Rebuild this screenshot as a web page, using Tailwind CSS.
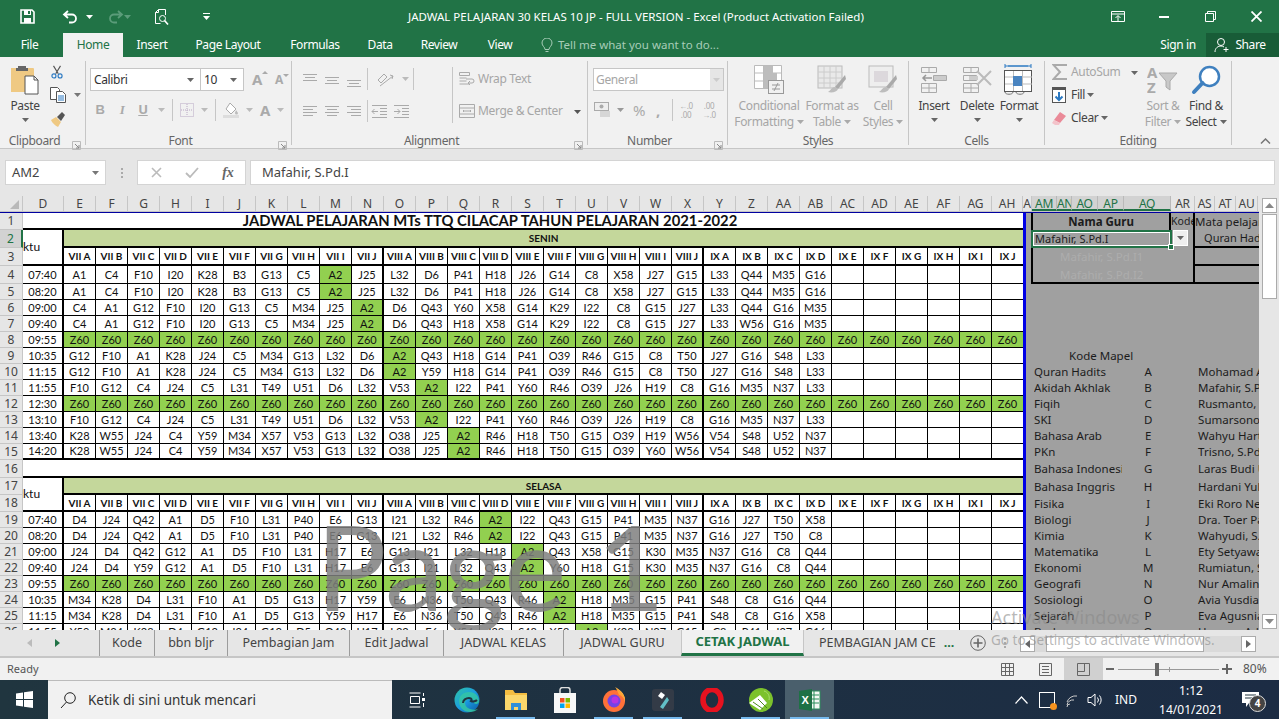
<!DOCTYPE html>
<html lang="id">
<head>
<meta charset="UTF-8">
<title>JADWAL PELAJARAN 30 KELAS 10 JP - Excel</title>
<script src="https://cdn.jsdelivr.net/npm/@tailwindcss/browser@4"></script>
</head>
<body class="bg-[#e6e6e6]">
<div id="app" class="relative w-[1279px] h-[719px] overflow-hidden flex flex-col text-[12px] text-[#444] font-['Noto_Sans',sans-serif]"></div>
<script>
// small helpers for repeated ribbon bits
const caret = (c = '#777') => `<svg width="7" height="4" class="inline-block shrink-0"><path d="M0 0h7L3.5 4z" fill="${c}"/></svg>`;
const launcher = `<svg width="9" height="9" class="absolute right-[4px] bottom-[-2px]"><path d="M.5.5h8v8h-8z" fill="none" stroke="#bbb"/><path d="M3 3l4 4M7 4v3H4" fill="none" stroke="#888"/></svg>`;
const vsep = (h = 'h-[22px]') => `<div class="w-px ${h} bg-[#c6c6c6] shrink-0"></div>`;

function group(cls, label, hasLauncher, inner) {
  return `<div class="relative flex flex-col h-[84px] shrink-0 border-r border-[#c6c6c6] ${cls}">
    <div class="h-[73px] shrink-0 flex">${inner}</div>
    <div class="relative h-[14px] shrink-0 leading-[14px] text-center text-[#666] ${hasLauncher ? 'pr-[16px]' : ''}">${label}${hasLauncher ? launcher : ''}</div>
  </div>`;
}
function big(cls, icon, lines, opts = {}) {
  const col = opts.off ? 'text-[#a6a6a6]' : 'text-[#444]';
  const car = opts.off ? '#aaa' : '#666';
  return `<div class="flex flex-col items-center shrink-0 ${cls} ${col}">
    <div class="h-[37px] flex items-center justify-center shrink-0">${icon}</div>
    ${lines.map((l, i) => `<div class="h-[16px] leading-[16px] whitespace-nowrap flex items-center gap-[3px]">${l}${opts.inline && i == lines.length - 1 ? caret(car) : ''}</div>`).join('')}
    ${opts.below ? `<div class="h-[12px] flex items-center">${caret(car)}</div>` : ''}
  </div>`;
}

// ribbon icons
const icons = {
  paste: `<svg width="30" height="30" viewBox="0 0 30 30"><path d="M1 3h22a1 1 0 0 1 1 1v23H1z" fill="#efc983"/><path d="M8 3V1h8v2h2v3H6V3z" fill="#666"/><path d="M15 11h9l4 4v14H15z" fill="#fff" stroke="#555"/><path d="M24 11v4h4" fill="none" stroke="#555"/></svg>`,
  cut: `<svg width="16" height="16" viewBox="0 0 16 16"><path d="M4 1l5.5 9M12 1L6.5 10" stroke="#555" stroke-width="1.3" fill="none"/><circle cx="4.5" cy="12.5" r="2.3" fill="none" stroke="#2b79c2" stroke-width="1.3"/><circle cx="11.5" cy="12.5" r="2.3" fill="none" stroke="#2b79c2" stroke-width="1.3"/></svg>`,
  copy: `<svg width="16" height="16" viewBox="0 0 16 16" fill="#fff" stroke="#555"><path d="M.5.5h7l2 2v10h-9z"/><path d="M6.5 4.5h6l3 3v8h-9z"/><path d="M8 9h6M8 11h6M8 13h6" stroke="#2b79c2"/></svg>`,
  painter: `<svg width="16" height="16" viewBox="0 0 16 16"><path d="M1 9l5-3 5 5-3 5C6 15 2 12 1 9z" fill="#efc983"/><path d="M7 6l5-5 3 3-4 6z" fill="#555"/></svg>`,
  borders: `<svg width="14" height="14" viewBox="0 0 14 14" fill="none" stroke="#b9a9c4" stroke-dasharray="1 1"><path d="M.5.5h13v13H.5zM7 1v12M1 7h12"/></svg>`,
  fill: `<svg width="16" height="16" viewBox="0 0 16 16"><path d="M7 1l6 6-5 5-5-5z" fill="#fff" stroke="#aaa"/><path d="M13 8l2 3a1.500 1.500 0 0 1-3 0z" fill="#bbb"/><rect y="13" width="16" height="3" fill="#ddd"/></svg>`,
  cond: `<svg width="30" height="30" viewBox="0 0 30 30"><path d="M.5.5h27v23H.5zM9.500 1v22M18.500 1v22M1 8h26M1 16h26" fill="#fff" stroke="#bbb"/><path d="M10 1h9v7h-9zM10 8h13v8H10zM10 16h6v7h-6z" fill="#bdbdbd"/><rect x="14.500" y="15.500" width="15" height="13" fill="#f1f1f1" stroke="#999"/><path d="M18 20h8M18 24h8M24 18l-4 8" stroke="#999"/></svg>`,
  table: `<svg width="30" height="30" viewBox="0 0 30 30"><rect x="1" y="1" width="24" height="22" fill="#e9e9e9" stroke="#bbb"/><path d="M1 7h24M1 13h24M1 18h24M7 1v22M13 1v22M19 1v22" stroke="#ccc"/><path d="M28 10L18 22l3 2L29 14z" fill="#aaa"/><path d="M18 22c-3 0-4 3-7 5 4 1 9 0 10-3z" fill="#bdbdbd"/></svg>`,
  styles: `<svg width="30" height="30" viewBox="0 0 30 30"><rect x="1" y="1" width="24" height="21" fill="#eee" stroke="#bbb"/><rect x="6" y="6" width="14" height="11" fill="#dcd8dc"/><path d="M28 10L18 22l3 2L29 14z" fill="#aaa"/><path d="M18 22c-3 0-4 3-7 5 4 1 9 0 10-3z" fill="#bdbdbd"/></svg>`,
  insert: `<svg width="28" height="28" viewBox="0 0 28 28" fill="none" stroke="#aaa"><path d="M1.500 1.500h15v5h-15zM9 1.500v5M1.500 17.500h15v9h-15zM9 17.500v9M1.500 22h15M13.500 9.500h13v5h-13zM20 9.500v5" /><path d="M12 12H3M6 9l-3 3 3 3" stroke="#999" stroke-width="1.500"/><rect x="14" y="10" width="12" height="4" fill="#ccc" stroke="none"/></svg>`,
  del: `<svg width="30" height="28" viewBox="0 0 30 28" fill="none" stroke="#aaa"><path d="M1.500 1.500h15v5h-15zM9 1.500v5M1.500 17.500h15v9h-15zM9 17.500v9M1.500 22h15M1.500 9.500h13v5h-13z"/><rect x="7" y="10" width="9" height="4" fill="#ccc" stroke="none"/><path d="M15 5l14 14M29 5L15 19" stroke="#bbb" stroke-width="2"/></svg>`,
  format: `<svg width="30" height="34" viewBox="0 0 30 34"><path d="M1 3h26M1 1v4M27 1v4" stroke="#2b79c2" fill="none"/><path d="M4 3h20" stroke="#2b79c2" stroke-width="1"/><rect x=".500" y="7.500" width="27" height="21" fill="#fff" stroke="#555"/><path d="M1 14h27M1 21h27M9.500 8v20M18.500 8v20" stroke="#bbb"/><rect x="9" y="13" width="9" height="10" fill="#4a84c0"/><path d="M1 29c0 3 8 3 8 0M12 29c0 3 8 3 8 0" fill="none" stroke="#777"/></svg>`,
  sum: `<svg width="16" height="16" viewBox="0 0 16 16"><path d="M15 1H1.500l6.500 7-6.500 7H15" fill="none" stroke="#aaa" stroke-width="2"/></svg>`,
  fillDown: `<svg width="14" height="16" viewBox="0 0 14 16"><rect x=".5" y=".5" width="13" height="15" fill="#fff" stroke="#555"/><rect x="0" y="0" width="14" height="3" fill="#555"/><path d="M7 5v8M3.500 9.500L7 13l3.500-3.500" fill="none" stroke="#2b79c2" stroke-width="2"/></svg>`,
  clear: `<svg width="14" height="13" viewBox="0 0 14 13"><path d="M8 0l6 4-6 7-6-3z" fill="#ea8a98"/><path d="M2 8l6 3-1 2H3L0 11z" fill="#f3c3ca"/></svg>`,
  sort: `<svg width="32" height="30" viewBox="0 0 32 30"><text x="0" y="13" font-family="Noto Sans" font-weight="700" font-size="15" fill="#aaa">A</text><text x="0" y="28" font-family="Noto Sans" font-weight="700" font-size="15" fill="#aaa">Z</text><path d="M12 8h18l-7 8v9l-4-3v-6z" fill="#c8c8c8" stroke="#aaa"/></svg>`,
  find: `<svg width="30" height="30" viewBox="0 0 30 30"><circle cx="18.500" cy="11.500" r="9.500" fill="#fff" stroke="#3f80bf" stroke-width="2.500"/><path d="M11.500 18L3 27" stroke="#3f80bf" stroke-width="4" stroke-linecap="round"/></svg>`,
};

function smallBtn(cls, inner) { return `<div class="flex items-center justify-center shrink-0 ${cls}">${inner}</div>`; }
function lines(ys, w) { return `<svg width="16" height="16" viewBox="0 0 16 16" stroke="#aaa">${ys.map(p => `<path d="M${p[0]} ${p[2]}.500H${p[1]}"/>`).join('')}</svg>`; }

const titleBar = `<div class="h-[33px] shrink-0 bg-[#217346] flex items-center text-white relative">
  <div class="w-[54px] flex justify-center pl-[0px]"><svg width="15" height="15" viewBox="0 0 15 15"><path d="M1 1h11l2 2v11H1z" fill="none" stroke="#fff" stroke-width="1.600"/><path d="M4 1h7v5H4zM4 9h7v5H4z" fill="#fff"/><rect x="8" y="2" width="2" height="3" fill="#217346"/></svg></div>
  <div class="w-[28px] flex justify-center ml-[2px]"><svg width="16" height="14" viewBox="0 0 16 14" fill="none" stroke="#fff" stroke-width="1.800"><path d="M6 1L2 4.500 6 8M2 4.500h8a3.800 3.800 0 0 1 0 8H7"/></svg></div>
  <div class="w-[10px] flex justify-center">${caret('#fff')}</div>
  <div class="w-[40px] flex justify-center ml-[2px]"><svg width="16" height="14" viewBox="0 0 16 14" fill="none" stroke="#5b9c7a" stroke-width="1.800"><path d="M10 1l4 3.500L10 8M14 4.500H6a3.800 3.800 0 0 0 0 8h3"/></svg></div>
  <div class="w-[7px] flex justify-center -ml-[12px] mr-[7px]">${caret('#5b9c7a')}</div>
  <div class="w-[30px] flex justify-center ml-[8px]"><svg width="15" height="16" viewBox="0 0 15 16" fill="none" stroke="#fff"><path d="M11.500 6V.5h-7l-3 3v11h5M4.500.5v3h-3"/><circle cx="8.500" cy="9.500" r="3"/><path d="M10.500 11.500l3.500 4" stroke-width="1.600"/></svg></div>
  <div class="w-[7px] ml-[27px] flex flex-col items-center gap-[2px]"><div class="w-[7px] h-px bg-white"></div>${caret('#fff')}</div>
  <div class="absolute left-[408px] top-0 h-[33px] leading-[33px] whitespace-nowrap text-[11.5px]">JADWAL PELAJARAN 30 KELAS 10 JP - FULL VERSION - Excel (Product Activation Failed)</div>
  <div class="ml-auto flex items-center">
    <div class="w-[46px] flex justify-center"><svg width="14" height="12" viewBox="0 0 14 12" fill="none" stroke="#fff"><path d="M.5.5h13v10H.5zM1 3h12"/><path d="M7 10V5M4.500 7L7 4.500 9.500 7"/></svg></div>
    <div class="w-[46px] flex justify-center"><div class="w-[10px] h-[2px] bg-white"></div></div>
    <div class="w-[46px] flex justify-center"><svg width="11" height="11" viewBox="0 0 11 11" fill="none" stroke="#fff"><path d="M.5 2.500h8v8h-8zM2.500 2.500v-2h8v8h-2"/></svg></div>
    <div class="w-[46px] flex justify-center"><svg width="11" height="11" viewBox="0 0 11 11" stroke="#fff" stroke-width="1.800"><path d="M.5.5l10 10M10.500.5l-10 10"/></svg></div>
  </div>
</div>`;

const tabClass = 'flex items-center justify-center text-white shrink-0 tracking-[-.4px]';
const tabBar = `<div class="h-[24px] shrink-0 bg-[#217346] flex items-stretch leading-none">
  <div class="${tabClass} w-[59px]">File</div><div class="w-[4px]"></div>
  <div class="${tabClass} w-[60px] !text-[#217346] bg-[#f1f1f1]">Home</div>
  <div class="${tabClass} w-[58px]">Insert</div>
  <div class="${tabClass} w-[94px]">Page Layout</div>
  <div class="${tabClass} w-[80px]">Formulas</div>
  <div class="${tabClass} w-[50px]">Data</div>
  <div class="${tabClass} w-[68px]">Review</div>
  <div class="${tabClass} w-[54px]">View</div>
  <div class="flex items-center text-[#a8cdb8] ml-[14px] gap-[5px] text-[11.5px]"><svg width="12" height="15" viewBox="0 0 12 15" fill="none" stroke="#a8cdb8"><path d="M4 11.500C4 9 1 8 1 5a5 5 0 0 1 10 0c0 3-3 4-3 6.500zM4.500 13.500h3"/></svg>Tell me what you want to do...</div>
  <div class="ml-auto flex items-stretch">
    <div class="${tabClass} w-[56px]">Sign in</div>
    <div class="${tabClass} w-[73px] bg-[#185c37] gap-[5px] pr-[5px]"><svg width="16" height="16" viewBox="0 0 16 16" fill="none" stroke="#fff"><circle cx="7" cy="5" r="3.500"/><path d="M1 15c0-4 3-6 6-6 1 0 2 .3 3 1M12 10v5M9.500 12.500h5"/></svg>Share</div>
  </div>
</div>`;

const clipboard = group('w-[86px]', 'Clipboard', true, `
  ${big('w-[50px]', icons.paste, ['Paste'], { below: true })}
  <div class="flex flex-col pt-[1px] w-[34px]">
    <div class="h-[20px] pl-[0px] flex items-center">${smallBtn('w-[14px] ml-[0px]', icons.cut)}</div>
    <div class="h-[26px] flex items-center gap-[8px]">${icons.copy}${caret()}</div>
    <div class="h-[22px] flex items-center">${icons.painter}</div>
  </div>`);

const font = group('w-[206px]', 'Font', true, `<div class="flex flex-col pl-[3px] pt-[7px]">
  <div class="flex items-center h-[23px]">
    <div class="ml-[1px] w-[111px] h-[23px] bg-white border border-[#c6c6c6] flex items-center justify-between px-[3px] pr-[6px] text-[#333]">Calibri${caret('#666')}</div>
    <div class="w-[44px] -ml-px h-[23px] bg-white border border-[#c6c6c6] flex items-center justify-between px-[3px] pr-[6px] text-[#333]">10${caret('#666')}</div>
    <div class="w-[24px] ml-[1px] relative text-center text-[#aaa] text-[15px] font-bold">A<svg width="6" height="3" class="absolute right-[1px] top-[3px]"><path d="M3 0l3 3H0z" fill="#aaa"/></svg></div>
    <div class="w-[20px] relative text-center text-[#aaa] text-[12px] font-bold">A<svg width="6" height="3" class="absolute right-0 top-[3px]"><path d="M0 0h6L3 3z" fill="#aaa"/></svg></div>
  </div>
  <div class="flex items-center h-[24px] mt-[7px] text-[#aaa]">
    ${smallBtn('w-[22px] font-bold text-[13px] font-[Liberation_Sans]', 'B')}
    ${smallBtn('w-[22px] italic font-bold text-[13px] font-[Liberation_Serif]', 'I')}
    ${smallBtn('w-[20px] font-bold underline text-[13px]', 'U')}
    ${smallBtn('w-[16px]', caret('#bbb'))}
    <div class="ml-[3px]">${vsep()}</div>
    ${smallBtn('w-[28px]', icons.borders)}
    ${smallBtn('w-[7px]', caret('#bbb'))}
    <div class="ml-[7px]">${vsep()}</div>
    ${smallBtn('w-[30px]', icons.fill)}
    ${smallBtn('w-[7px]', caret('#bbb'))}
    ${smallBtn('w-[24px] text-[15px] font-bold', 'A')}
    ${smallBtn('w-[7px]', caret('#bbb'))}
  </div></div>`);

const alignment = group('w-[296px]', 'Alignment', true, `
  <div class="flex flex-col w-[160px] pt-[6px] pl-[7px]">
    <div class="flex items-center h-[24px]">
      ${smallBtn('w-[22px]', lines([[1, 15, 3], [3, 13, 6], [1, 15, 9]]))}
      ${smallBtn('w-[22px]', lines([[1, 15, 6], [3, 13, 9], [1, 15, 12]]))}
      ${smallBtn('w-[22px]', lines([[1, 15, 9], [3, 13, 12], [1, 15, 15]]))}
      <div class="ml-[2px]">${vsep()}</div>
      ${smallBtn('w-[34px]', `<svg width="18" height="16" viewBox="0 0 18 16" fill="none" stroke="#aaa"><path d="M2 9l6-6 3 3-6 6zM4 15L17 5M14 4l3 1-1 3"/></svg>`)}
      ${smallBtn('w-[7px]', caret('#bbb'))}
      <div class="ml-[4px]">${vsep()}</div>
    </div>
    <div class="flex items-center h-[24px] mt-[8px]">
      ${smallBtn('w-[22px]', lines([[1, 15, 3], [1, 11, 6], [1, 15, 9], [1, 11, 12]]))}
      ${smallBtn('w-[22px]', lines([[1, 15, 3], [3, 13, 6], [1, 15, 9], [3, 13, 12]]))}
      ${smallBtn('w-[22px]', lines([[1, 15, 3], [5, 15, 6], [1, 15, 9], [5, 15, 12]]))}
      <div class="ml-[2px]">${vsep()}</div>
      ${smallBtn('w-[22px]', `<svg width="17" height="14" viewBox="0 0 17 14" fill="none" stroke="#aaa"><path d="M1 1.500h15M9 4.500h7M9 7.500h7M9 10.500h7M1 13.500h15M7 7.500H1M3.500 5L1 7.500 3.500 10"/></svg>`)}
      ${smallBtn('w-[22px]', `<svg width="17" height="14" viewBox="0 0 17 14" fill="none" stroke="#aaa"><path d="M1 1.500h15M9 4.500h7M9 7.500h7M9 10.500h7M1 13.500h15M1 7.500h6M4.500 5L7 7.500 4.500 10"/></svg>`)}
    </div>
  </div>
  <div class="pt-[6px]">${vsep('h-[56px]')}</div>
  <div class="flex flex-col text-[#a6a6a6] pl-[6px] pt-[6px]">
    <div class="h-[24px] flex items-center gap-[3px] whitespace-nowrap"><svg width="16" height="16" viewBox="0 0 16 16" fill="none" stroke="#aaa"><path d="M.5 1.500h10v3H.5zM.5 7h7M.5 10h7M.5 13h10M7 8h6a1.800 1.800 0 0 1 0 4h-4M11 10l-2 2 2 2"/></svg>Wrap Text</div>
    <div class="h-[24px] mt-[8px] flex items-center gap-[3px] whitespace-nowrap"><svg width="16" height="16" viewBox="0 0 16 16" fill="none" stroke="#aaa"><path d="M.5 1.500h15v13H.5zM1 5h14M1 11h14M4 8h8M5 7L4 8l1 1M11 7l1 1-1 1"/></svg>Merge &amp; Center<span class="ml-[8px]">${caret('#555')}</span></div>
  </div>`);

const number = group('w-[140px]', 'Number', true, `<div class="flex flex-col pl-[5px] pt-[7px]">
  <div class="w-[131px] h-[23px] bg-white border border-[#c6c6c6] flex items-center justify-between pl-[2px] text-[#a6a6a6]">General<div class="w-[13px] h-full bg-[#e6e6e6] flex items-center justify-center">${caret('#ccc')}</div></div>
  <div class="flex items-center h-[24px] mt-[7px] text-[#aaa]">
    ${smallBtn('w-[20px]', `<svg width="18" height="18" viewBox="0 0 18 18"><rect x=".5" y="1.500" width="14" height="8" fill="#eee" stroke="#aaa"/><circle cx="7.500" cy="5.500" r="2" fill="#aaa"/><path d="M6 11h10M6 13h10M6 15h10" stroke="#bbb"/></svg>`)}
    ${smallBtn('w-[14px]', caret('#999'))}
    ${smallBtn('w-[24px] text-[15px]', '%')}
    ${smallBtn('w-[14px] text-[15px] font-bold', ',')}
    <div class="ml-[7px]">${vsep()}</div>
    ${smallBtn('w-[26px] text-[8px] leading-[9px] text-center', '←.0<br>.00')}
    ${smallBtn('w-[20px] text-[8px] leading-[9px] text-center', '.00<br>→.0')}
  </div></div>`);

const styles = group('w-[181px]', 'Styles', false, `<div class="w-[9px]"></div>
  ${big('w-[64px]', icons.cond, ['Conditional', 'Formatting'], { off: true, inline: true })}
  ${big('w-[62px]', icons.table, ['Format as', 'Table'], { off: true, inline: true })}
  ${big('w-[40px]', icons.styles, ['Cell', 'Styles'], { off: true, inline: true })}`);

const cells = group('w-[136px]', 'Cells', false, `<div class="w-[5px]"></div>
  ${big('w-[40px]', icons.insert, ['Insert'], { below: true })}<div class="w-[3px]"></div>
  ${big('w-[40px]', icons.del, ['Delete'], { below: true })}
  ${big('w-[44px]', icons.format, ['Format'], { below: true })}`);

const editing = group('w-[187px]', 'Editing', false, `
  <div class="w-[98px] pl-[7px] flex flex-col shrink-0">
    <div class="h-[22px] flex items-center gap-[3px] text-[#a6a6a6]">${icons.sum}AutoSum<span class="ml-[8px]">${caret('#666')}</span></div>
    <div class="h-[24px] flex items-center gap-[5px]">${icons.fillDown}<span class="flex items-center gap-[2px]">Fill${caret('#666')}</span></div>
    <div class="h-[22px] flex items-center gap-[5px]">${icons.clear}<span class="flex items-center gap-[3px]">Clear${caret('#666')}</span></div>
  </div>
  ${big('w-[40px]', icons.sort, ['Sort &amp;', 'Filter'], { off: true, inline: true })}
  ${big('w-[46px]', icons.find, ['Find &amp;', 'Select'], { inline: true })}`);

const ribbon = `<div class="h-[92px] shrink-0 bg-[#f1f1f1] border-b border-[#c6c6c6] pt-[4px] flex relative tracking-[-.35px]">
  ${clipboard}${font}${alignment}${number}${styles}${cells}${editing}
  <svg width="11" height="6" class="absolute left-[1260px] top-[81px]"><path d="M1 5.500l4.500-4.500 4.500 4.500" fill="none" stroke="#777" stroke-width="1.500"/></svg>
</div>`;

const formulaBar = `<div class="h-[47px] shrink-0 bg-[#e6e6e6] flex items-start pt-[11px] text-[13px]">
  <div class="ml-[5px] w-[101px] h-[25px] bg-white border border-[#d4d4d4] flex items-center justify-between pl-[6px] pr-[6px]">AM2${caret('#777')}</div>
  <div class="w-[31px] h-[25px] flex flex-col items-center justify-center gap-[2px]"><i class="w-[2px] h-[2px] bg-[#aaa]"></i><i class="w-[2px] h-[2px] bg-[#aaa]"></i><i class="w-[2px] h-[2px] bg-[#aaa]"></i></div>
  <div class="w-[109px] h-[25px] bg-white border border-[#d4d4d4] flex items-center">
    ${smallBtn('w-[36px]', `<svg width="11" height="11" stroke="#bbb" stroke-width="1.600"><path d="M1 1l9 9M10 1l-9 9"/></svg>`)}
    ${smallBtn('w-[36px]', `<svg width="14" height="11" fill="none" stroke="#bbb" stroke-width="1.800"><path d="M1 6l4 4 8-9"/></svg>`)}
    ${smallBtn('w-[36px] italic font-bold font-[Liberation_Serif] text-[14px] text-[#666]', 'fx')}
  </div>
  <div class="ml-[4px] w-[1025px] h-[25px] bg-white border border-[#d4d4d4] flex items-center pl-[11px]">Mafahir, S.Pd.I</div>
</div>`;

// column header strip
const letters = ['D','E','F','G','H','I','J','K','L','M','N','O','P','Q','R','S','T','U','V','W','X','Y','Z','AA','AB','AC','AD','AE','AF','AG','AH'];
let colHead = `<div class="w-[23px] shrink-0 border-r border-[#c6c6c6] flex items-end justify-end pr-[3px] pb-[2px]"><svg width="9" height="9"><path d="M9 0v9H0z" fill="#b9b9b9"/></svg></div>`;
letters.forEach((l, i) => {
  colHead += `<div class="${i == 0 ? 'w-[41px]' : (i == 30 ? 'w-[31px]' : 'w-[32px]')} shrink-0 text-center border-r border-[#c6c6c6]">${l}</div>`;
});
colHead += `<div class="w-[9px] shrink-0 text-center border-r border-[#c6c6c6] overflow-hidden">A</div>`;
[['AM', 'w-[25px]'], ['AN', 'w-[15px]'], ['AO', 'w-[26px]'], ['AP', 'w-[26px]'], ['AQ', 'w-[47px]']].forEach(c => {
  colHead += `<div class="${c[1]} shrink-0 text-center bg-[#d2d2d2] text-[#217346] border-r border-[#b9b9b9] border-b-2 border-b-[#217346] whitespace-nowrap overflow-hidden tracking-[-.3px]">${c[0]}</div>`;
});
[['AR', 'w-[24px]'], ['AS', 'w-[20px]'], ['AT', 'w-[21px]'], ['AU', 'w-[22px]']].forEach(c => {
  colHead += `<div class="${c[1]} shrink-0 text-center border-r border-[#c6c6c6] whitespace-nowrap overflow-hidden tracking-[-.3px]">${c[0]}</div>`;
});

// sheet data
const rowH = [17,18,18,18,16,16,16,16,16,16,16,16,16,16,16,18,17,17,16,16,16,16,16,16,16,16];
const classes = ['VII A','VII B','VII C','VII D','VII E','VII F','VII G','VII H','VII I','VII J','VIII A','VIII B','VIII C','VIII D','VIII E','VIII F','VIII G','VIII H','VIII I','VIII J','IX A','IX B','IX C','IX D','IX E','IX F','IX G','IX H','IX I','IX J'];
const z60 = Array(30).fill('Z60').join(' ');
const schedule = {
  4:  ['07:40','A1 C4 F10 I20 K28 B3 G13 C5 A2 J25 L32 D6 P41 H18 J26 G14 C8 X58 J27 G15 L33 Q44 M35 G16'],
  5:  ['08:20','A1 C4 F10 I20 K28 B3 G13 C5 A2 J25 L32 D6 P41 H18 J26 G14 C8 X58 J27 G15 L33 Q44 M35 G16'],
  6:  ['09:00','C4 A1 G12 F10 I20 G13 C5 M34 J25 A2 D6 Q43 Y60 X58 G14 K29 I22 C8 G15 J27 L33 Q44 G16 M35'],
  7:  ['09:40','C4 A1 G12 F10 I20 G13 C5 M34 J25 A2 D6 Q43 H18 X58 G14 K29 I22 C8 G15 J27 L33 W56 G16 M35'],
  8:  ['09:55', z60],
  9:  ['10:35','G12 F10 A1 K28 J24 C5 M34 G13 L32 D6 A2 Q43 H18 G14 P41 O39 R46 G15 C8 T50 J27 G16 S48 L33'],
  10: ['11:15','G12 F10 A1 K28 J24 C5 M34 G13 L32 D6 A2 Y59 H18 G14 P41 O39 R46 G15 C8 T50 J27 G16 S48 L33'],
  11: ['11:55','F10 G12 C4 J24 C5 L31 T49 U51 D6 L32 V53 A2 I22 P41 Y60 R46 O39 J26 H19 C8 G16 M35 N37 L33'],
  12: ['12:30', z60],
  13: ['13:10','F10 G12 C4 J24 C5 L31 T49 U51 D6 L32 V53 A2 I22 P41 Y60 R46 O39 J26 H19 C8 G16 M35 N37 L33'],
  14: ['13:40','K28 W55 J24 C4 Y59 M34 X57 V53 G13 L32 O38 J25 A2 R46 H18 T50 G15 O39 H19 W56 V54 S48 U52 N37'],
  15: ['14:20','K28 W55 J24 C4 Y59 M34 X57 V53 G13 L32 O38 J25 A2 R46 H18 T50 G15 O39 Y60 W56 V54 S48 U52 N37'],
  19: ['07:40','D4 J24 Q42 A1 D5 F10 L31 P40 E6 G13 I21 L32 R46 A2 I22 Q43 G15 P41 M35 N37 G16 J27 T50 X58'],
  20: ['08:20','D4 J24 Q42 A1 D5 F10 L31 P40 E6 G13 I21 L32 R46 A2 I22 Q43 G15 P41 M35 N37 G16 J27 T50 C8'],
  21: ['09:00','J24 D4 Q42 G12 A1 D5 F10 L31 H17 E6 G13 I21 L32 H18 A2 Q43 X58 G15 K30 M35 N37 G16 C8 Q44'],
  22: ['09:40','J24 D4 Y59 G12 A1 D5 F10 L31 H17 E6 G13 I21 L32 Q43 A2 Y60 H18 G15 K30 M35 N37 G16 C8 Q44'],
  23: ['09:55', z60],
  24: ['10:35','M34 K28 D4 L31 F10 A1 D5 G13 H17 Y59 E6 N36 T50 Q43 R46 A2 H18 M35 G15 P41 S48 C8 G16 Q44'],
  25: ['11:15','M34 K28 D4 L31 F10 A1 D5 G13 Y59 H17 E6 N36 T50 Q43 R46 A2 H18 M35 G15 P41 S48 C8 G16 X58'],
  26: ['11:55','Y59 M34 K28 D4 G12 J24 G13 D5 Q42 H17 L32 E6 Y54 J28 S48 X58 A2 K28 N37 G15 C8 P41 J27 G16'],
};
const thickRows = [15];
const sideBorder = i => (i == 9 || i == 19) ? 'border-r-2' : (i == 29 ? '' : 'border-r');

function dayRows(rowNo, day) {
  return `<tr style="height:${rowH[rowNo - 1]}px">
      <td rowspan="2" class="border-r-2 border-b-2 border-black bg-white text-left align-middle text-[12px]">ktu</td>
      <td colspan="30" class="border-b-2 border-black bg-[#c4d79b] text-center font-bold text-[10px]">${day}</td>
    </tr>
    <tr style="height:${rowH[rowNo]}px">${classes.map((c, i) => `<td class="${sideBorder(i)} border-b-2 border-black bg-white text-center font-bold text-[10px] whitespace-nowrap overflow-hidden">${c}</td>`).join('')}</tr>`;
}
function bodyRow(rowNo) {
  const [time, codes] = schedule[rowNo];
  const list = codes.split(' ');
  const bottom = thickRows.includes(rowNo) ? 'border-b-2' : 'border-b';
  let tds = `<td class="border-r-2 ${bottom} border-black bg-white text-center pb-[1px]">${time}</td>`;
  for (let i = 0; i < 30; i++) {
    const code = list[i] || '';
    const hl = code == 'Z60' || code == 'A2';
    tds += `<td class="${sideBorder(i)} ${bottom} border-black text-center pb-[1px] ${hl ? 'bg-[#92d050]' : 'bg-white'}">${code}</td>`;
  }
  return `<tr style="height:${rowH[rowNo - 1]}px">${tds}</tr>`;
}

let tbody = `<tr style="height:${rowH[0]}px"><td colspan="31" class="border-b-2 border-black bg-white text-center font-bold text-[14.8px] pr-[66px] whitespace-nowrap">JADWAL PELAJARAN MTs TTQ CILACAP TAHUN PELAJARAN 2021-2022</td></tr>`;
tbody += dayRows(2, 'SENIN');
for (let r = 4; r <= 15; r++) tbody += bodyRow(r);
tbody += `<tr style="height:${rowH[15]}px"><td colspan="31" class="border-b-2 border-black bg-white"></td></tr>`;
tbody += dayRows(17, 'SELASA');
for (let r = 19; r <= 26; r++) tbody += bodyRow(r);

const rowHeaders = rowH.map((h, i) => `<div style="height:${h}px" class="shrink-0 flex items-center justify-center border-b border-[#c6c6c6] ${i == 1 ? 'bg-[#d2d2d2] text-[#217346] border-r-2 border-r-[#217346]' : 'border-r border-r-[#c6c6c6]'}">${i + 1}</div>`).join('');

// right hand panel, same row heights as the sheet
const mapel = [
  ['Quran Hadits','A','Mohamad Arif'],['Akidah Akhlak','B','Mafahir, S.Pd.I'],['Fiqih','C','Rusmanto, S.Ag'],['SKI','D','Sumarsono, S.Pd'],
  ['Bahasa Arab','E','Wahyu Hartono'],['PKn','F','Trisno, S.Pd'],['Bahasa Indonesia','G','Laras Budi Utami'],['Bahasa Inggris','H','Hardani Yuliana'],
  ['Fisika','I','Eki Roro Nesti'],['Biologi','J','Dra. Toer Painem'],['Kimia','K','Wahyudi, S.Pd'],['Matematika','L','Ety Setyawati'],
  ['Ekonomi','M','Rumiatun, S.Pd'],['Geografi','N','Nur Amalina'],['Sosiologi','O','Avia Yusdiana'],['Sejarah','P','Eva Agusniar'],['Budaya','Q','Hanung Adi'],
];
let list = '';
for (let r = 5; r <= 26; r++) {
  const h = rowH[r - 1];
  let inner = '';
  if (r == 9) inner = `<span class="ml-[43px]">Kode Mapel</span>`;
  if (r >= 10) {
    const m = mapel[r - 10];
    inner = `<span class="ml-[8px] w-[88px] shrink-0 overflow-hidden">${m[0]}</span><span class="ml-[16px] w-[20px] shrink-0 text-center">${m[1]}</span><span class="ml-[40px]">${m[2]}</span>`;
  }
  list += `<div style="height:${h}px" class="shrink-0 flex items-center whitespace-nowrap overflow-hidden">${inner}</div>`;
}
const panel = `<div class="w-[236px] shrink-0 border-l-[3px] border-[#0000e6] bg-[#a0a0a0] text-[11.5px] text-[#1c1c1c] flex flex-col overflow-hidden">
  <div class="pl-[5px] w-full shrink-0">
    <div class="h-[17px] flex items-stretch">
      <div class="w-[140px] shrink-0 border-x-2 border-black text-center font-bold leading-[17px] text-[11.5px]">Nama Guru</div>
      <div class="w-[24px] shrink-0 border-r-2 border-black leading-[17px] whitespace-nowrap overflow-hidden text-[10.5px]">Kode</div>
      <div class="leading-[17px] whitespace-nowrap">Mata pelajaran</div>
    </div>
    <div class="h-[18px] flex items-stretch">
      <div class="relative w-[141px] shrink-0 border-2 border-[#217346] outline outline-white -outline-offset-3 pl-[2px] leading-[13px] text-[11px]">Mafahir, S.Pd.I
        <i class="absolute -right-[4px] -bottom-[4px] w-[6px] h-[6px] bg-[#217346] border border-white"></i>
      </div>
      <div class="ml-[1px] w-[15px] h-[16px] bg-[#efefef] border border-white flex items-center justify-center shrink-0">${caret('#666')}</div>
      <div class="w-[7px] shrink-0 border-r-2 border-black"></div>
      <div class="pl-[9px] leading-[16px] whitespace-nowrap border-b-2 border-black grow text-[11px]">Quran Hadits</div>
    </div>
    <div class="flex">
      <div class="w-[164px] h-[36px] shrink-0 border-x-2 border-b-2 border-black text-[#adadad] text-[11.5px] leading-[18px] pl-[27px]">Mafahir, S.Pd.I1<br>Mafahir, S.Pd.I2</div>
      <div class="-ml-[2px] grow border-l-2 border-black"><div class="h-[18px] border-b-2 border-black"></div><div class="h-[18px] border-b-2 border-black"></div></div>
    </div>
  </div>
  ${list}
</div>`;

const scrollBar = `<div class="w-[20px] shrink-0 bg-[#e6e6e6] flex flex-col items-center pt-[2px]">
  <div class="w-[15px] h-[15px] shrink-0 bg-white border border-[#ababab] flex items-center justify-center"><svg width="9" height="5"><path d="M4.500 0L9 5H0z" fill="#888"/></svg></div>
  <div class="w-[15px] h-[85px] shrink-0 mt-px bg-white border border-[#ababab]"></div>
  <div class="w-[15px] h-[15px] shrink-0 mt-auto mb-[1px] bg-white border border-[#ababab] flex items-center justify-center"><svg width="9" height="5"><path d="M0 0h9L4.500 5z" fill="#888"/></svg></div>
</div>`;

const sheet = `<div class="h-[434px] shrink-0 flex">
  <div class="flex flex-col w-[1259px] shrink-0 overflow-hidden">
    <div class="h-[16px] shrink-0 flex bg-[#e6e6e6] border-b border-[#c6c6c6] leading-[15px] whitespace-nowrap">${colHead}</div>
    <div class="relative h-[418px] shrink-0 flex overflow-hidden border-t border-[#0000a0]">
      <div class="w-[23px] shrink-0 flex flex-col bg-[#e6e6e6]">${rowHeaders}</div>
      <table class="w-[1000px] shrink-0 table-fixed border-separate border-spacing-0 self-start font-[Lato,sans-serif] text-[11px] text-[#111] leading-none">
        <colgroup><col class="w-[41px]">${Array(29).fill('<col class="w-[32px]">').join('')}<col class="w-[31px]"></colgroup>
        <tbody>${tbody}</tbody>
      </table>
      ${panel}
      <div class="absolute left-[316px] top-[294px] text-[118px] leading-[118px] font-[Lato,sans-serif] text-[#7f7f7f]/85 whitespace-nowrap pointer-events-none">Page 1</div>
    </div>
  </div>
  ${scrollBar}
</div>`;

const tabItem = (t, w) => `<div class="${w} shrink-0 h-[26px] flex items-center justify-center border-r border-[#9c9c9c] whitespace-nowrap">${t}</div>`;
const sheetTabs = `<div class="h-[28px] shrink-0 bg-[#e6e6e6] border-b-2 border-[#c6c6c6] flex items-start text-[12.5px] relative">
  <div class="w-[100px] shrink-0 h-[26px] flex items-center border-r border-[#9c9c9c]">
    <svg width="5" height="8" class="ml-[27px]"><path d="M5 0v8L0 4z" fill="#bbb"/></svg><svg width="5" height="8" class="ml-[23px]"><path d="M0 0v8l5-4z" fill="#217346"/></svg>
  </div>
  ${tabItem('Kode', 'w-[55px]')}${tabItem('bbn bljr', 'w-[73px]')}${tabItem('Pembagian Jam', 'w-[122px]')}${tabItem('Edit Jadwal', 'w-[94px]')}${tabItem('JADWAL KELAS', 'w-[120px]')}
  <div class="w-[117px] shrink-0 h-[26px] flex items-center justify-center whitespace-nowrap">JADWAL GURU</div>
  <div class="w-[123px] shrink-0 h-[26px] bg-[#f1f1f1] border-x border-[#c6c6c6] border-b-[3px] border-b-[#217346] flex items-center justify-center font-bold text-[13px] text-[#217346]">CETAK JADWAL</div>
  <div class="ml-[15px] h-[26px] flex items-center whitespace-nowrap">PEMBAGIAN JAM CE</div>
  <div class="ml-[8px] h-[26px] flex items-center font-bold text-[#217346]">...</div>
  <div class="ml-[16px] h-[26px] flex items-center"><svg width="16" height="16" viewBox="0 0 16 16" fill="none" stroke="#666"><circle cx="8" cy="8" r="7.300"/><path d="M8 3.500v9M3.500 8h9" stroke-width="1.600"/></svg></div>
  <div class="ml-[18px] h-[26px] flex flex-col items-center justify-center gap-[2px]"><i class="w-[2px] h-[2px] bg-[#aaa]"></i><i class="w-[2px] h-[2px] bg-[#aaa]"></i><i class="w-[2px] h-[2px] bg-[#aaa]"></i></div>
  <div class="ml-[14px] mt-[6px] flex h-[16px] items-stretch w-[236px] bg-[#dadada]">
    <div class="w-[15px] bg-white border border-[#ababab] flex items-center justify-center"><svg width="5" height="8"><path d="M5 0v8L0 4z" fill="#666"/></svg></div>
    <div class="w-[158px] ml-[11px] bg-white border border-[#ababab]"></div>
    <div class="w-[15px] ml-auto bg-white border border-[#ababab] flex items-center justify-center"><svg width="5" height="8"><path d="M0 0v8l5-4z" fill="#666"/></svg></div>
  </div>
</div>`;

const statusBar = `<div class="h-[22px] shrink-0 bg-[#f1f1f1] flex items-center text-[11px] text-[#555]">
  <div class="pl-[7px] w-[989px]">Ready</div>
  <div class="w-[37px] flex justify-center"><svg width="13" height="13" viewBox="0 0 13 13" fill="none" stroke="#666"><path d="M.5.500h12v12H.5zM4.500 1v12M8.500 1v12M1 4.500h12M1 8.500h12"/></svg></div>
  <div class="w-[38px] flex justify-center"><svg width="13" height="13" viewBox="0 0 13 13" fill="none" stroke="#666"><path d="M.5.500h12v12H.5zM3 3.500h7M3 6.500h7M3 9.500h7"/></svg></div>
  <div class="w-[39px] h-full bg-[#d0d0d0] flex items-center justify-center"><svg width="13" height="13" viewBox="0 0 13 13" fill="none" stroke="#666"><path d="M.5.500h12v12H.5zM.5 8.500h7v-8"/></svg></div>
  <div class="ml-[3px] w-[8px] h-[2px] bg-[#666]"></div>
  <div class="relative ml-[4px] w-[101px] h-px bg-[#999]"><i class="absolute left-[37px] -top-[6px] w-[4px] h-[13px] bg-[#666]"></i><i class="absolute left-[51px] -top-[2px] w-px h-[5px] bg-[#999]"></i></div>
  <svg width="10" height="10" viewBox="0 0 10 10" class="ml-[3px]" stroke="#666" stroke-width="2"><path d="M0 5h10M5 0v10"/></svg>
  <div class="ml-[11px] text-[12px]">80%</div>
</div>`;

const taskIcons = {
  edge: `<svg width="26" height="26" viewBox="0 0 26 26"><defs><linearGradient id="e1" x1="0" y1="0" x2="1" y2="1"><stop offset="0" stop-color="#2fc5a0"/><stop offset=".5" stop-color="#1b9de2"/><stop offset="1" stop-color="#0c59a4"/></linearGradient></defs><circle cx="13" cy="13" r="12.500" fill="url(#e1)"/><path d="M25 14c0-6-5-9-10-9-6 0-10 4-10 9 0 6 4 11 11 11 3 0 6-1 8-3-2 1-5 1-8 0-3-1-5-3-5-6 0-2 2-4 5-4 4 0 4 3 4 4s5 2 5-2z" fill="#34c6a5" opacity=".85"/><path d="M9 16c0-3 3-5 6-5s3 2 2 3c2 1 5 0 6-1" fill="none" stroke="#1f3540" stroke-width="2"/></svg>`,
  explorer: `<svg width="24" height="22" viewBox="0 0 24 22"><path d="M1 1h8l2 3h12v17H1z" fill="#f4bd41"/><rect x="1" y="6" width="22" height="15" fill="#fbd76b"/><path d="M7 21v-7h10v7h-3v-3h-4v3z" fill="#2f8fd8"/></svg>`,
  store: `<svg width="24" height="26" viewBox="0 0 24 26"><path d="M7 7V3a2.500 2.500 0 0 1 2.500-2.500h5A2.500 2.500 0 0 1 17 3v4" fill="none" stroke="#ddd" stroke-width="1.500"/><path d="M1 6h22v20H1z" fill="#f7f7f7"/><rect x="7" y="11" width="4.500" height="4.500" fill="#f25022"/><rect x="12.500" y="11" width="4.500" height="4.500" fill="#7fba00"/><rect x="7" y="16.500" width="4.500" height="4.500" fill="#00a4ef"/><rect x="12.500" y="16.500" width="4.500" height="4.500" fill="#ffb900"/></svg>`,
  firefox: `<svg width="24" height="25" viewBox="0 0 24 25"><circle cx="12" cy="14" r="11" fill="#ff7139"/><path d="M13 0c6 3 11 8 10 15C22 8 17 5 13 0z" fill="#ffbd4f"/><path d="M14 1c5 3 9 7 9 13 0-1-3-6-6-6z" fill="#ffa436"/><circle cx="12" cy="14" r="6.500" fill="#7542e5"/><circle cx="13" cy="13" r="3.500" fill="#b833e1"/></svg>`,
  filmora: `<svg width="22" height="22" viewBox="0 0 22 22"><rect width="22" height="22" rx="3" fill="#333b47"/><path d="M9 3l4 3-3 4-4-3z" fill="#fff"/><path d="M15 8l2 3-6 9-3-2z" fill="#62bfc6"/></svg>`,
  opera: `<svg width="24" height="24" viewBox="0 0 24 24"><ellipse cx="12" cy="12" rx="9" ry="10.500" fill="none" stroke="#e6121f" stroke-width="5.500"/></svg>`,
  corel: `<svg width="24" height="24" viewBox="0 0 24 24"><circle cx="12" cy="12" r="12" fill="#7cc22c"/><path d="M0 15L11 7l7 8-7 7z" fill="#fff"/><path d="M4 14l10 7M9 11l9 9" stroke="#4a8a1a"/><path d="M15 3c4 1 6 5 5 9" stroke="#a8dd6e" fill="none"/></svg>`,
  excel: `<svg width="22" height="22" viewBox="0 0 22 22"><rect x="9" y="2" width="12" height="18" fill="#f4f9f4" stroke="#2a8f5b"/><path d="M10 6h10M10 10h10M10 14h10M15 2v18" stroke="#2a8f5b"/><path d="M0 2l13-2v22L0 20z" fill="#1e7145"/><text x="2.500" y="15" font-family="Liberation Sans" font-size="11" font-weight="700" fill="#fff">X</text></svg>`,
};
const taskBtn = (icon, cls = '', on = false) => `<div class="relative w-[49px] h-[39px] shrink-0 flex items-center justify-center ${cls}">${icon}${on ? '<i class="absolute left-[5px] right-[5px] bottom-0 h-[2px] bg-[#76b9ed]"></i>' : ''}</div>`;

const taskbar = `<div class="h-[39px] shrink-0 flex items-center bg-linear-to-r from-[#20353f] to-[#1c2c44] text-white">
  <div class="w-[48px] flex justify-center"><svg width="17" height="17" viewBox="0 0 17 17" fill="#fff"><path d="M0 2.500l7-1v6.500H0zM8 1.300L17 0v8H8zM0 9h7v6.500l-7-1zM8 9h9v8l-9-1.300z"/></svg></div>
  <div class="w-[344px] h-[39px] bg-[#f1f1f1] border-t border-[#bbb] flex items-center text-[#333] text-[13.5px]">
    <svg width="16" height="17" viewBox="0 0 16 17" class="ml-[12px]" fill="none" stroke="#222"><circle cx="10" cy="6" r="5.300"/><path d="M6.500 10L1 16"/></svg>
    <span class="ml-[12px]">Ketik di sini untuk mencari</span>
  </div>
  <div class="flex items-center ml-[1px]">
    ${taskBtn(`<svg width="17" height="16" viewBox="0 0 17 16" fill="none" stroke="#fff"><path d="M.5 1h11M.5 15h11M1.500 4.500h9v7h-9zM14.500 1v3M14.500 11v4"/><rect x="13" y="6" width="3" height="3" fill="#fff" stroke="none"/></svg>`)}
    ${taskBtn(taskIcons.edge)}
    ${taskBtn(taskIcons.explorer, '', true)}
    ${taskBtn(taskIcons.store)}
    ${taskBtn(taskIcons.firefox, '', true)}
    ${taskBtn(taskIcons.filmora, '', true)}
    ${taskBtn(taskIcons.opera)}
    ${taskBtn(taskIcons.corel, '', true)}
    ${taskBtn(taskIcons.excel, 'bg-[#4a5f6c]', true)}
  </div>
  <div class="ml-auto flex items-center">
    <svg width="13" height="8" fill="none" stroke="#fff" stroke-width="1.200"><path d="M.5 7.500L6.500 1l6 6.500"/></svg>
    <div class="relative ml-[11px] w-[16px] h-[16px] border border-white"><i class="absolute -right-[3px] -bottom-[3px] w-[7px] h-[7px] rounded-full bg-[#f7931e]"></i></div>
    <svg width="14" height="14" viewBox="0 0 14 14" class="ml-[11px]" fill="none" stroke="#ccc"><path d="M1 9a9 9 0 0 1 10-6M1 12a6 6 0 0 1 7-5M1 14a3 3 0 0 1 3-3"/></svg>
    <svg width="16" height="16" viewBox="0 0 16 16" class="ml-[7px]" fill="none" stroke="#fff"><path d="M1 5.500h3L8 2v12L4 10.500H1zM10.500 5.500a4 4 0 0 1 0 5M12.500 3.500a7 7 0 0 1 0 9"/></svg>
    <div class="ml-[12px] w-[36px] text-[12px]">IND</div>
    <div class="ml-[5px] w-[70px] text-center text-[12px] leading-[19px]">1:12<br>14/01/2021</div>
    <div class="relative ml-[16px] mr-[20px] w-[17px] h-[15px]">
      <svg width="17" height="15" viewBox="0 0 17 15" fill="#fff"><path d="M0 0h17v11H7l-3 4v-4H0z"/><path d="M3 3h11M3 6h11" stroke="#20353f"/></svg>
      <i class="absolute -right-[7px] top-[3px] w-[17px] h-[17px] rounded-full bg-[#444] border border-[#ddd] not-italic text-[10px] leading-[15px] text-center font-bold">4</i>
    </div>
  </div>
</div>`;

const activation = `<div class="absolute left-[991px] top-[605px] text-[#8a8a8a]/60 whitespace-nowrap pointer-events-none">
  <div class="text-[18px] leading-[24px]">Activate Windows</div>
  <div class="text-[13.5px] leading-[18px] mt-[2px]">Go to Settings to activate Windows.</div>
</div>`;

document.getElementById('app').innerHTML = titleBar + tabBar + ribbon + formulaBar + sheet + sheetTabs + statusBar + taskbar + activation;
</script>
</body>
</html>
